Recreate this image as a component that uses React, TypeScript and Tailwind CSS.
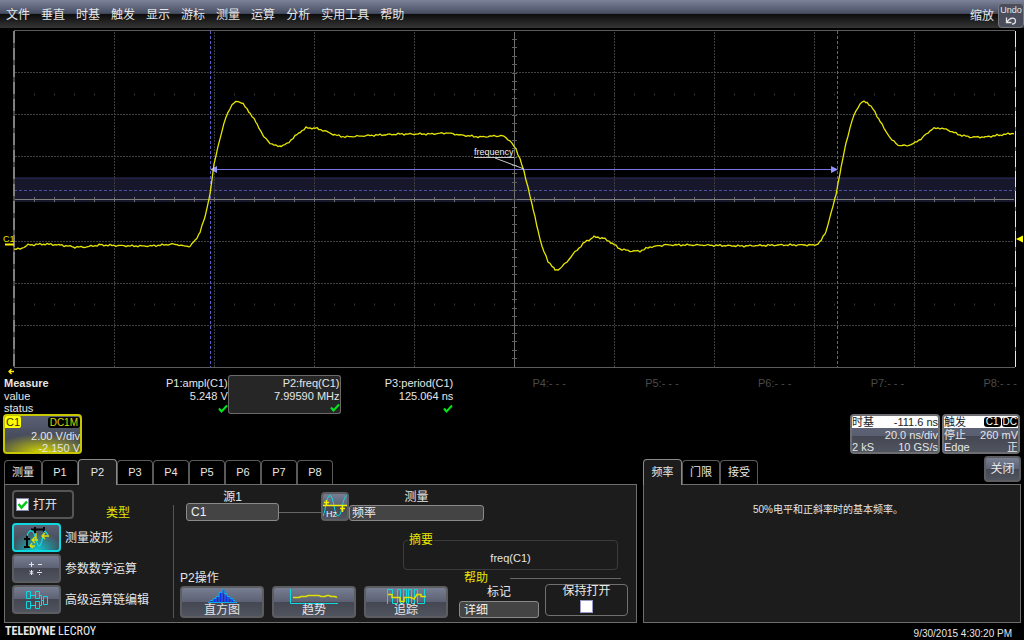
import React, { useState } from 'react';
import clsx from 'clsx';

const MENU = ['文件', '垂直', '时基', '触发', '显示', '游标', '测量', '运算', '分析', '实用工具', '帮助'];
const TABS = ['测量', 'P1', 'P2', 'P3', 'P4', 'P5', 'P6', 'P7', 'P8'];
const HELP_TABS = ['频率', '门限', '接受'];

const MEASURES = [
  { name: 'P1:ampl(C1)', value: '5.248 V' },
  { name: 'P2:freq(C1)', value: '7.99590 MHz' },
  { name: 'P3:period(C1)', value: '125.064 ns' },
  { name: 'P4:- - -', value: '' },
  { name: 'P5:- - -', value: '' },
  { name: 'P6:- - -', value: '' },
  { name: 'P7:- - -', value: '' },
  { name: 'P8:- - -', value: '' },
];

const BUTTON =
  'border-2 border-[#5c5d60] rounded-[4px] bg-[linear-gradient(#787e92,#5b6072_50%,#444752_50%,#50545f)]';
const FIELD =
  'appearance-none rounded-[3px] border border-[#8a8a8a] bg-[#444444] px-1 text-xs leading-none text-[#eeeeee]';

// Key points of the C1 trace, one div = 100 x 42
const TRACE: [number, number][] = [
  [14, 249], [20, 249], [28, 245], [45, 244], [60, 245], [75, 247], [85, 247], [100, 245], [130, 246],
  [150, 246], [175, 244], [183, 246], [190, 246], [195, 241], [200, 232], [205, 217], [210, 194],
  [214, 165], [218, 146], [222, 131], [226, 117], [230, 108], [234, 103], [238, 101], [243, 104],
  [250, 113], [257, 124], [264, 137], [270, 143], [276, 146], [281, 146], [287, 144], [293, 138],
  [300, 132], [306, 128], [315, 128], [325, 131], [335, 135], [345, 137], [360, 136], [380, 135],
  [400, 134], [430, 134], [447, 133], [460, 135], [480, 137], [495, 136], [504, 136], [510, 141],
  [516, 149], [520, 159], [524, 172], [528, 187], [533, 209], [538, 230], [542, 247], [548, 261],
  [555, 270], [558, 270], [565, 264], [575, 252], [585, 242], [594, 237], [603, 238], [612, 243],
  [620, 249], [630, 251], [640, 251], [650, 247], [665, 245], [700, 245], [740, 246], [780, 245],
  [805, 245], [816, 245], [821, 241], [826, 231], [831, 214], [836, 194], [841, 168], [846, 143],
  [850, 128], [854, 115], [858, 107], [862, 102], [867, 102], [873, 109], [880, 121], [885, 130],
  [892, 140], [898, 145], [905, 146], [913, 144], [922, 138], [932, 129], [940, 128], [948, 130],
  [960, 135], [970, 137], [985, 137], [1000, 135], [1015, 133],
];

// Straight runs between key points with a little acquisition noise on top
function tracePath() {
  let d = '';
  for (let i = 0; i < TRACE.length - 1; i++) {
    const [x0, y0] = TRACE[i];
    const [x1, y1] = TRACE[i + 1];
    for (let x = x0; x < x1; x += 2) {
      const noise = Math.sin(x * 1.7) * 0.6 + Math.sin(x * 0.61) * 0.5;
      const y = y0 + ((y1 - y0) * (x - x0)) / (x1 - x0) + noise;
      d += `${d ? 'L' : 'M'}${x} ${y.toFixed(1)}`;
    }
  }
  return d;
}

const range = (n: number) => Array.from({ length: n }, (_, i) => i);

function Scope() {
  return (
    <svg viewBox="0 28 1024 348" className="block w-full font-['Liberation_Sans',sans-serif]">
      {/* cursor band */}
      <rect x="14" y="177" width="1001" height="25" fill="#17172b" />
      <path d="M14 178.500H1015" stroke="#24244a" />
      <path d="M14 190.500H1015" stroke="#5050a0" strokeDasharray="3 2" />
      {/* graticule */}
      {range(9).map((i) => (
        <path key={i} d={`M${114.5 + i * 100} 32V367`} stroke={i === 4 ? '#707070' : '#3c3c3c'} strokeDasharray={i === 4 ? undefined : '2 1'} />
      ))}
      {range(7).map((i) => (
        <path key={i} d={`M15 ${Math.round(72 + i * 42.2) + 0.5}H1014`} stroke={i === 3 ? '#808080' : '#424242'} strokeDasharray={i === 3 ? undefined : '2 1'} />
      ))}
      {range(49).map((i) => (
        <path key={i} d={`M${34.5 + i * 20} 197V202`} stroke="#707070" />
      ))}
      {range(39).map((i) => (
        <path key={i} d={`M512 ${Math.round(39 + i * 8.4) + 0.5}H517`} stroke="#606060" />
      ))}
      <path d="M34 94.500H1014M34 304.500H1014" stroke="#333" strokeWidth="2" strokeDasharray="1 19" />
      <path d="M14 30.500H1015M14 367.500H1015" stroke="#5c5c5c" />
      <path d="M14 31V367" stroke="#4a4a4a" strokeWidth="2" />
      <path d="M14 31V367" stroke="#808080" strokeWidth="2" strokeDasharray="12 5" />
      <path d="M1015.500 31V367" stroke="#707070" />
      <path d="M1015.500 31V367" stroke="#e8e8e8" strokeDasharray="16 4" />
      {/* period cursors */}
      <path d="M210.500 31V367M837.500 31V367" stroke="#5c5cc8" strokeDasharray="3 2" />
      <path d="M212 169.500H836" stroke="#7474e8" />
      <path d="M210 169.500l7-3.500v7zM838 169.500l-7-3.500v7z" fill="#9494ff" />
      <path d={tracePath()} fill="none" stroke="#e6e600" strokeWidth="1.300" strokeLinejoin="round" />
      <text x="474" y="155" fontSize="9" fill="#f0f0f0">frequency</text>
      <path d="M474 157.500H514M495 158L524 169" fill="none" stroke="#c8c8c8" />
      {/* channel level, trigger level and trigger delay marks */}
      <text x="3" y="242" fontSize="9" fill="#e6e600">C1</text>
      <path d="M5 244.500H14" stroke="#ffee00" strokeWidth="2" />
      <path d="M1016 239l7-3.500v7z" fill="#ffff00" />
      <path d="M9 371.500H14M11.500 369L9 371.500L11.500 374" fill="none" stroke="#ffee00" strokeWidth="1.300" />
    </svg>
  );
}

function Check() {
  return (
    <svg viewBox="0 0 10 9" className="ml-auto h-[9px] w-[10px]">
      <path d="M1 4.500L3.500 7.500L9 1.500" fill="none" stroke="#00e81c" strokeWidth="2" />
    </svg>
  );
}

function MeasureTable() {
  return (
    <table className="w-full table-fixed border-separate border-spacing-0 text-[11px] leading-3">
      <colgroup>
        <col className="w-[111px]" />
        {MEASURES.map((m) => <col key={m.name} />)}
      </colgroup>
      <tbody>
        <tr className="h-[14px]">
          <th className="p-0 text-left align-bottom font-bold">Measure</th>
          {MEASURES.map((m, i) => (
            <th
              key={m.name}
              className={clsx(
                'p-0 text-right align-bottom font-normal whitespace-nowrap',
                i === 1 && 'rounded-t-[3px] border border-b-0 border-[#6a6a6a] bg-[#262626]',
                i > 2 && 'text-[#4a4a4a]'
              )}
            >
              {m.name}
            </th>
          ))}
        </tr>
        <tr className="h-[13px]">
          <th className="p-0 text-left font-normal">value</th>
          {MEASURES.map((m, i) => (
            <td key={m.name} className={clsx('p-0 text-right', i === 1 && 'border-x border-[#6a6a6a] bg-[#262626]')}>
              {m.value}
            </td>
          ))}
        </tr>
        <tr className="h-3">
          <th className="p-0 text-left font-normal">status</th>
          {MEASURES.map((m, i) => (
            <td key={m.name} className={clsx('p-0', i === 1 && 'rounded-b-[3px] border border-t-0 border-[#6a6a6a] bg-[#262626]')}>
              {m.value && <Check />}
            </td>
          ))}
        </tr>
      </tbody>
    </table>
  );
}

function Descriptors() {
  return (
    <div className="flex items-start gap-0.5 pr-1 pl-[3px] text-[11px] leading-3">
      <button className="mr-auto h-10 w-[79px] overflow-hidden rounded-[4px] border-2 border-[#c8c800] bg-[radial-gradient(70%_50%_at_50%_100%,#d8d800,transparent),linear-gradient(#5a6074,#3a3e4a)] text-right">
        <span className="flex items-center justify-between">
          <span className="rounded-r-[2px] bg-[#ffff00] px-px text-[#333300]">C1</span>
          <span className="rounded-[3px] bg-black px-0.5 text-[10px] leading-[11px] text-[#d8d800]">DC1M</span>
        </span>
        <span className="block pt-0.5">2.00 V/div</span>
        <span className="block">-2.150 V</span>
      </button>
      <button className="h-10 w-[90px] overflow-hidden rounded-[4px] border-2 border-[#6c6e72] bg-[linear-gradient(#62687a,#595e70_55%,#444752_55%,#50545f)]">
        <span className="flex justify-between bg-white text-[#222222]"><span>时基</span><span>-111.6 ns</span></span>
        <span className="block pt-px text-right">20.0 ns/div</span>
        <span className="flex justify-between"><span>2 kS</span><span>10 GS/s</span></span>
      </button>
      <button className="h-10 w-[78px] overflow-hidden rounded-[4px] border-2 border-[#6c6e72] bg-[linear-gradient(#62687a,#595e70_55%,#444752_55%,#50545f)]">
        <span className="flex items-center justify-between bg-white text-[#222222]">
          <span>触发</span>
          <span className="flex gap-px text-[10px] leading-[10px] text-white">
            <span className="rounded-[3px] bg-black px-0.5">C1</span>
            <span className="rounded-[3px] bg-black px-px">DC</span>
          </span>
        </span>
        <span className="flex justify-between pt-px"><span>停止</span><span>260 mV</span></span>
        <span className="flex justify-between"><span>Edge</span><span>正</span></span>
      </button>
    </div>
  );
}

interface TabsProps {
  items: string[];
  active: string;
  onSelect: (item: string) => void;
}

function TabBar({ items, active, onSelect }: TabsProps) {
  return (
    <div role="tablist" className="flex items-end text-[11px]">
      {items.map((item) => (
        <button
          key={item}
          role="tab"
          aria-selected={item === active}
          onClick={() => onSelect(item)}
          className={clsx(
            'rounded-t-[4px] border border-b-0',
            item === active
              ? 'z-10 -mb-px h-[26px] w-[39px] border-[#8a8a8a] bg-[#1c1c1c] pb-px'
              : 'h-6 border-[#5a5a5a] bg-black',
            item !== active && (item.startsWith('P') ? 'w-9' : 'w-[38px]')
          )}
        >
          {item}
        </button>
      ))}
    </div>
  );
}

function WaveIcon() {
  return (
    <svg viewBox="0 0 26 22" className="h-[22px] w-[26px]" fill="none">
      <path d="M7 2.500H21M11 0V7M20 0V7M3 8V21M0 12H6M0 20H6" stroke="#050505" strokeWidth="2" />
      <path d="M3 9C4 5 6 3 8 4C12 6 12 18 15 19C19 19 18 5 21 4L24 8" stroke="#10d8e0" strokeWidth="1.300" />
      <path d="M8 13H14M11 10L8 13L11 16M12 6V12M18 9H25M21 6L18 9L21 12M6 19H11M8 16L6 19L9 21" stroke="#e0e000" strokeWidth="1.300" />
    </svg>
  );
}

function MathIcon() {
  return (
    <svg viewBox="0 0 26 20" className="h-5 w-[26px]" fill="none" stroke="#e4e4e4">
      <path d="M5 5.500H10M7.500 3V8M14 5.500H18M7.500 11V16M5.500 12L9.500 15M9.500 12L5.500 15M13 13.500H18M15.500 11V12M15.500 15V16" />
    </svg>
  );
}

function ChainIcon() {
  return (
    <svg viewBox="0 0 26 20" className="h-5 w-[26px]" fill="none" stroke="#10d8e0">
      <path d="M2.500 1.500H6.500V8.500H2.500zM11.500 1.500H15.500V8.500H11.500zM2.500 11.500H6.500V18.500H2.500zM11.500 11.500H15.500V18.500H11.500zM19.500 6.500H23.500V14.500H19.500z" />
      <path d="M6.500 5.500H11.500M6.500 15.500H11.500M15.500 5.500H17.500V10.500H19.500M15.500 15.500H17.500V10.500" />
    </svg>
  );
}

const TYPES = [
  { label: '测量波形', Icon: WaveIcon },
  { label: '参数数学运算', Icon: MathIcon },
  { label: '高级运算链编辑', Icon: ChainIcon },
];

function HistogramIcon() {
  return (
    <svg viewBox="0 0 50 16" className="h-4 w-[50px]" fill="none">
      <path d="M14.500 14V12M17.500 14V10M20.500 14V8M23.500 14V5M26.500 14V2M29.500 14V7M32.500 14V9M35.500 14V11" stroke="#0030ff" strokeWidth="2" />
      <path d="M11 14.500H40M13 12.500H16V10.500H19V8.500H22V4.500H25V1.500H27V5.500H30V8.500H33V10.500H36V12.500H38" stroke="#10a8e8" />
    </svg>
  );
}

function TrendIcon() {
  return (
    <svg viewBox="0 0 50 16" className="h-4 w-[50px]" fill="none">
      <path d="M1.500 1V15.500H49" stroke="#10d8e0" />
      <path d="M4 9.500H10L12 8.500H17L19 7.500H30L32 8.500H36L38 7.500H40L42 8.500H46L48 9.500" stroke="#e0e000" strokeWidth="1.500" />
    </svg>
  );
}

function TrackIcon() {
  return (
    <svg viewBox="0 0 40 16" className="h-4 w-10" fill="none">
      <path d="M1.500 16V1.500H6.500V15.500H11.500V1.500H14.500V15.500H17.500V1.500H20.500V15.500H22.500V1.500H25.500V15.500H28.500V1.500H31.500V15.500H38.500V1" stroke="#10d8e0" />
      <path d="M2 6.500H6V9.500H14V13.500H18V9.500H25L28 11L31 6.500H35V8.500H40" stroke="#e0e000" strokeWidth="1.500" />
    </svg>
  );
}

const ACTIONS = [
  { label: '直方图', Icon: HistogramIcon },
  { label: '趋势', Icon: TrendIcon },
  { label: '追踪', Icon: TrackIcon },
];

function MeasurePanel() {
  const [on, setOn] = useState(true);
  const [keepOpen, setKeepOpen] = useState(false);
  const [type, setType] = useState('测量波形');

  return (
    <div className="flex h-[139px] border border-[#6e6e6e] bg-[#1c1c1c] text-xs leading-3">
      {/* 打开 + type buttons */}
      <div className="flex w-[168px] shrink-0 flex-col pt-[5px] pl-[7px]">
        <div className="flex gap-8">
          <label className="flex h-[29px] w-[62px] items-center gap-1 rounded-[4px] border-2 border-[#555555] pl-0.5">
            <span className="relative h-[13px] w-[13px]">
              <input
                type="checkbox"
                checked={on}
                onChange={(e) => setOn(e.target.checked)}
                className="block h-[13px] w-[13px] appearance-none border border-[#8888aa] bg-white"
              />
              {on && (
                <svg viewBox="0 0 13 13" className="pointer-events-none absolute inset-0">
                  <path d="M2.500 6L5.500 9.500L11 3.500" fill="none" stroke="#00c814" strokeWidth="2.500" />
                </svg>
              )}
            </span>
            打开
          </label>
          <span className="self-end text-[#e6e600]">类型</span>
        </div>
        <div className="mt-1 flex flex-col gap-0.5">
          {TYPES.map(({ label, Icon }) => (
            <label key={label} className="flex items-center gap-1 whitespace-nowrap">
              <button
                onClick={() => setType(label)}
                className={clsx(
                  'flex h-[29px] w-[49px] items-center justify-center',
                  type === label
                    ? 'rounded-[4px] border-2 border-[#10d8e0] bg-[radial-gradient(60%_70%_at_50%_100%,#10c8d0,transparent),linear-gradient(#5b6072,#3a4450)]'
                    : BUTTON
                )}
              >
                <Icon />
              </button>
              {label}
            </label>
          ))}
        </div>
      </div>
      <div className="mt-5 mb-1 w-px bg-[#555555]" />

      <div className="flex min-w-0 flex-1 flex-col pt-1.5 pr-2 pb-1 pl-1.5">
        <div className="flex items-end pl-1.5">
          <label className="flex w-[93px] flex-col text-center">
            源1
            <select className={clsx(FIELD, 'h-[18px]')}>
              <option>C1</option>
            </select>
          </label>
          <span className="mb-2 h-px w-[42px] bg-[#666666]" />
          <button aria-label="频率" className={clsx(BUTTON, 'h-[29px] w-7 overflow-hidden')}>
            <svg viewBox="0 0 24 25" className="h-[25px] w-6" fill="none">
              <path d="M0 22C3 16 3 2 7 1.500C11 2 11 22 15 22C20 21 18 6 24 1" stroke="#10d8e0" />
              <path d="M0 11.500H24M3.500 6V11M1 8.500H6M19.500 12V18M17 14.500H22" stroke="#f0f000" strokeWidth="1.500" />
              <text x="3" y="23" fontSize="9" fill="#f0f0f0">Hz</text>
            </svg>
          </button>
          <label className="flex w-[135px] flex-col gap-0.5 text-center">
            测量
            <select className={clsx(FIELD, 'h-4 pl-0.5')}>
              <option>频率</option>
            </select>
          </label>
        </div>

        <fieldset className="mt-auto mr-2.5 ml-auto h-9 w-[215px] rounded-[4px] border border-[#3c3c3c] text-[11px]">
          <legend className="ml-1 px-px text-xs leading-3 text-[#e6e600]">摘要</legend>
          <p className="pt-1.5 text-center">freq(C1)</p>
        </fieldset>

        <div className="mt-0.5 flex justify-between">
          <div className="flex flex-col justify-between">
            <span>P2操作</span>
            <div className="flex gap-2">
              {ACTIONS.map(({ label, Icon }) => (
                <button key={label} className={clsx(BUTTON, 'flex h-8 w-[84px] flex-col items-center')}>
                  <Icon />
                  <span className="leading-3">{label}</span>
                </button>
              ))}
            </div>
          </div>
          <div className="w-[169px]">
            <div className="flex items-center gap-[22px] pr-[7px] pl-[5px]">
              <span className="text-[#e6e600]">帮助</span>
              <span className="h-px flex-1 bg-[#666666]" />
            </div>
            <div className="flex gap-1.5">
              <label className="flex w-[80px] flex-col gap-[3px] pt-0.5 text-center">
                标记
                <select className={clsx(FIELD, 'h-[17px]')}>
                  <option>详细</option>
                </select>
              </label>
              <label className="flex h-8 flex-1 flex-col items-center gap-[3px] rounded-[4px] border border-[#707070]">
                保持打开
                <input
                  type="checkbox"
                  checked={keepOpen}
                  onChange={(e) => setKeepOpen(e.target.checked)}
                  className="h-[13px] w-[13px] appearance-none border border-[#9a9ac8] bg-white checked:bg-[#00c814]"
                />
              </label>
            </div>
          </div>
        </div>
      </div>
    </div>
  );
}

export default function App() {
  const [tab, setTab] = useState('P2');
  const [helpTab, setHelpTab] = useState('频率');

  return (
    <div className="min-h-screen bg-black font-['Liberation_Sans','Noto_Sans_CJK_SC',sans-serif] text-[#e6e6e6]">
      <header className="flex h-7 items-center justify-between bg-[linear-gradient(#7c839a,#474d61_48%,#0c0c0c_50%,#353535)] pl-1.5 text-xs">
        <nav className="flex gap-[11px] pt-px">
          {MENU.map((m) => <a key={m} href="#">{m}</a>)}
        </nav>
        <div className="flex items-center gap-1">
          <span className="pt-1">缩放</span>
          <button className="mt-0.5 flex h-[25px] w-[26px] flex-col items-center rounded-[4px] border border-[#77797f] bg-[#4a4e5c] text-[9px] leading-[13px]">
            Undo
            <svg viewBox="0 0 12 8" className="h-2 w-3" fill="none" stroke="#e6e6e6" strokeWidth="1.300">
              <path d="M1.500 0.500V5.500H6.500M2 5C5 0 10.500 0 10.500 4C10.500 6 9 7 7 7" />
            </svg>
          </button>
        </div>
      </header>

      <Scope />

      <div className="-mt-px pr-[7px] pl-1">
        <MeasureTable />
      </div>
      <Descriptors />

      <main className="mt-0.5 grid grid-cols-[633fr_378fr] gap-1.5 pr-[3px] pl-1">
        <section>
          <div className="flex h-7 items-end">
            <TabBar items={TABS} active={tab} onSelect={setTab} />
          </div>
          <MeasurePanel />
        </section>
        <section className="flex flex-col">
          <div className="flex h-7 items-end justify-between">
            <TabBar items={HELP_TABS} active={helpTab} onSelect={setHelpTab} />
            <button className={clsx(BUTTON, 'mb-0.5 h-[26px] w-[37px] text-xs')}>关闭</button>
          </div>
          <div className="flex-1 border border-[#6e6e6e] bg-[#1c1c1c] pt-4 pr-2 text-center text-[10px] leading-[18px]">
            50%电平和正斜率时的基本频率。
          </div>
        </section>
      </main>

      <footer className="flex items-end justify-between pr-3 pl-[5px]">
        <p className="font-['Roboto_Condensed','Liberation_Sans',sans-serif] text-xs leading-[17px]">
          <b>TELEDYNE</b> LECROY
        </p>
        <time className="text-[10px] leading-3">9/30/2015 4:30:20 PM</time>
      </footer>
    </div>
  );
}
